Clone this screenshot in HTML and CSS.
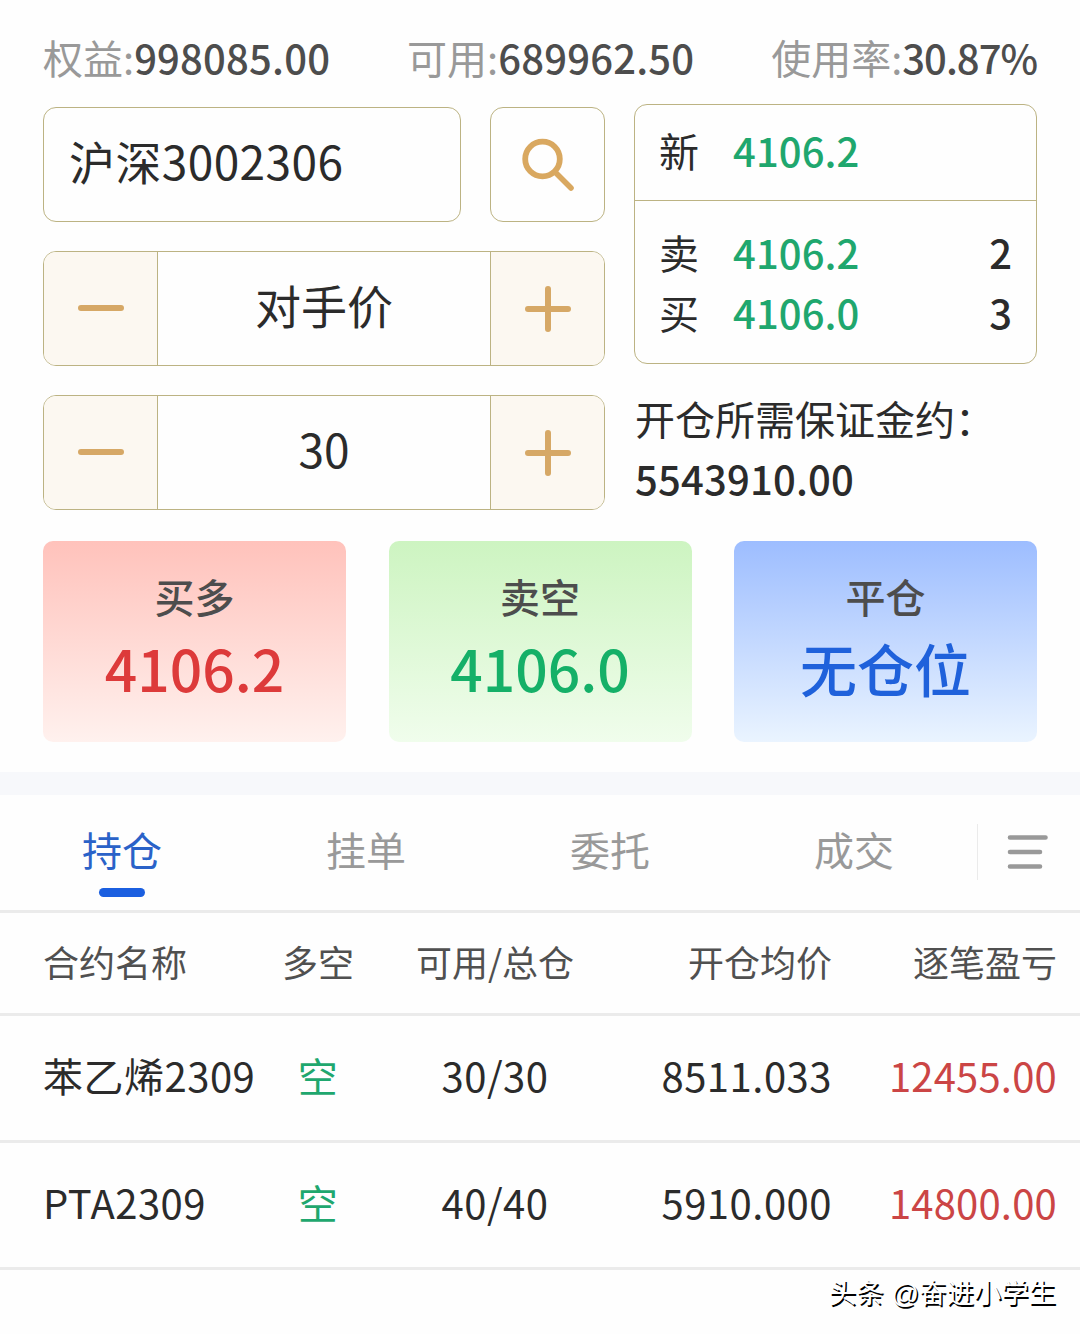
FILE: index.html
```html
<!DOCTYPE html>
<html lang="zh-CN">
  <head>
    <meta charset="UTF-8" />
    <meta name="viewport" content="width=device-width, initial-scale=1.0" />
    <title>期货交易</title>
    <link rel="stylesheet" href="styles.css">
  </head>

  <body>
    <header class="account">
      <div>权益:<b>998085.00</b></div>
      <div>可用:<b>689962.50</b></div>
      <div>使用率:<b class="rate">30.87%</b></div>
    </header>

    <section class="order">
      <div class="order-form">
        <div class="search-row">
          <div class="contract">沪深3002306</div>
          <button class="search" aria-label="搜索">
            <svg width="56" height="56" viewBox="0 0 56 56" fill="none" stroke="#d9a860" stroke-linecap="round">
              <circle cx="22.5" cy="22" r="17.3" stroke-width="5.8" />
              <path d="M35.5 35.5 L51 51" stroke-width="5.6" />
            </svg>
          </button>
        </div>

        <div class="stepper">
          <button class="minus" aria-label="减"><i></i></button>
          <div class="value">对手价</div>
          <button class="plus" aria-label="加"><i></i></button>
        </div>

        <div class="stepper">
          <button class="minus" aria-label="减"><i></i></button>
          <div class="value">30</div>
          <button class="plus" aria-label="加"><i></i></button>
        </div>
      </div>

      <div class="order-info">
        <div class="quote">
          <div class="quote-row latest"><span>新</span><b>4106.2</b></div>
          <div class="quote-list">
            <div class="quote-row"><span>卖</span><b>4106.2</b><em>2</em></div>
            <div class="quote-row"><span>买</span><b>4106.0</b><em>3</em></div>
          </div>
        </div>
        <div class="margin">
          <p>开仓所需保证金约：</p>
          <p class="amount">5543910.00</p>
        </div>
      </div>
    </section>

    <section class="actions">
      <button class="action buy"><span>买多</span><b>4106.2</b></button>
      <button class="action sell"><span>卖空</span><b>4106.0</b></button>
      <button class="action close"><span>平仓</span><b>无仓位</b></button>
    </section>

    <nav class="tabs">
      <a class="tab active">持仓</a>
      <a class="tab">挂单</a>
      <a class="tab">委托</a>
      <a class="tab">成交</a>
      <div class="menu">
        <svg width="42" height="36" viewBox="0 0 42 36" stroke="#999" stroke-width="4.6" stroke-linecap="round">
          <path d="M3 3.5 H38.5 M3 18 H33 M3 32.5 H33" />
        </svg>
      </div>
    </nav>

    <section class="positions">
      <div class="row head">
        <span>合约名称</span>
        <span>多空</span>
        <span>可用/总仓</span>
        <span>开仓均价</span>
        <span>逐笔盈亏</span>
      </div>
      <div class="row">
        <span>苯乙烯2309</span>
        <span class="short">空</span>
        <span>30/30</span>
        <span>8511.033</span>
        <span class="profit">12455.00</span>
      </div>
      <div class="row">
        <span>PTA2309</span>
        <span class="short">空</span>
        <span>40/40</span>
        <span>5910.000</span>
        <span class="profit">14800.00</span>
      </div>
    </section>

    <footer>头条 @奋进小学生</footer>
  </body>
</html>
```
FILE: styles.css
```css
* {
  margin: 0;
  padding: 0;
  box-sizing: border-box;
}

body {
  width: 1080px;
  height: 1334px;
  overflow: hidden;
  background-color: #fefefe;
  color: #2b2b2b;
  font-family: "Noto Sans CJK SC", sans-serif;
  font-size: 40px;
}

button {
  background: none;
  border: none;
  font-family: inherit;
  cursor: pointer;
}

b {
  font-weight: 500;
}

em {
  font-style: normal;
}

/* account summary */
.account {
  display: flex;
  justify-content: space-between;
  height: 104px;
  padding: 27px 43px 0;
  line-height: 60px;
  color: #999;
  white-space: nowrap;
}

.account b {
  color: #4d4d4d;
  letter-spacing: 0.2px;
}

.account .rate {
  letter-spacing: -1px;
}

/* order form */
.order {
  display: flex;
  gap: 29px;
  padding: 0 43px;
}

.order-form {
  display: flex;
  flex-direction: column;
  gap: 29px;
  width: 562px;
  padding-top: 3px;
}

.search-row {
  display: flex;
  gap: 29px;
}

.contract,
.search,
.stepper,
.quote {
  border: 1px solid #bcb383;
  border-radius: 13px;
}

.contract {
  width: 418px;
  height: 115px;
  padding-left: 25px;
  line-height: 104px;
  font-size: 46px;
  letter-spacing: 0.4px;
}

.search {
  display: flex;
  justify-content: center;
  align-items: center;
  width: 115px;
  height: 115px;
}

.stepper {
  display: flex;
  height: 115px;
  overflow: hidden;
}

.stepper button {
  display: grid;
  place-items: center;
  width: 113px;
  background-color: #fcf8f1;
}

.stepper .value {
  flex: 1;
  border: 1px solid #bcb383;
  border-width: 0 1px;
  text-align: center;
  font-size: 46px;
  line-height: 104px;
}

.minus i,
.plus i,
.plus i::after {
  display: block;
  width: 46px;
  height: 6px;
  border-radius: 3px;
  background-color: #d6a866;
}

.minus {
  padding-bottom: 2px;
}

.plus {
  padding-top: 1px;
}

.plus i::after {
  content: "";
  transform: rotate(90deg);
}

/* quote box */
.order-info {
  width: 403px;
}

.quote {
  height: 260px;
}

.quote-row {
  display: flex;
  padding: 0 24px;
  line-height: 60px;
}

.quote-row span {
  width: 74px;
}

.quote-row b {
  color: #1fa76e;
  letter-spacing: 0.1px;
}

.quote-row em {
  margin-left: auto;
  font-weight: 500;
}

.latest {
  height: 96px;
  padding-top: 15px;
  border-bottom: 1px solid #bcb383;
}

.quote-list {
  padding-top: 21px;
}

.margin {
  padding: 24px 0 0 1px;
  line-height: 60px;
  white-space: nowrap;
}

.amount {
  font-weight: 500;
  letter-spacing: 0.2px;
}

/* action buttons */
.actions {
  display: flex;
  justify-content: space-between;
  padding: 31px 43px 30px;
}

.action {
  display: flex;
  flex-direction: column;
  align-items: center;
  width: 303px;
  height: 201px;
  padding-top: 25px;
  border-radius: 10px;
}

.action span {
  font-size: 40px;
  line-height: 60px;
  font-weight: 500;
  color: #4d4d4d;
}

.action b {
  font-size: 57px;
  line-height: 82px;
}

.buy {
  background: linear-gradient(#ffc2bb, #fff1ee);
}

.buy b {
  color: #dd3a3a;
}

.sell {
  background: linear-gradient(#cdf4c1, #f0fdec);
}

.sell b {
  color: #15b068;
}

.close {
  background: linear-gradient(#9dbdff, #eaf4ff);
}

.close b {
  color: #1f61db;
}

/* tabs */
.tabs {
  display: flex;
  height: 141px;
  border-top: 23px solid #f7f8fb;
  border-bottom: 3px solid #ebebeb;
}

.tab {
  display: flex;
  flex-direction: column;
  align-items: center;
  width: 244px;
  padding-top: 24px;
  line-height: 60px;
  color: #999;
}

.tab.active {
  color: #2a62c8;
}

.tab.active::after {
  content: "";
  width: 46px;
  height: 9px;
  margin-top: 9px;
  border-radius: 5px;
  background-color: #1b5fe0;
}

.menu {
  display: flex;
  align-items: center;
  height: 56px;
  margin: 29px 0 0 1px;
  padding-left: 29px;
  border-left: 1px solid #ebebeb;
}

/* positions table */
.row {
  display: grid;
  grid-template-columns: 215px 120px 234px 220px 225px;
  height: 127px;
  padding-left: 43px;
  border-bottom: 3px solid #ebebeb;
  line-height: 118px;
  letter-spacing: 0.5px;
  white-space: nowrap;
}

.row span:nth-child(2),
.row span:nth-child(3) {
  text-align: center;
}

.row span:nth-child(4),
.row span:nth-child(5) {
  text-align: right;
}

.row .profit {
  letter-spacing: 0.2px;
}

.head {
  height: 103px;
  line-height: 97px;
  font-size: 36px;
  letter-spacing: 0;
  color: #505050;
}

.short {
  color: #1fa76e;
}

.profit {
  color: #cb4545;
}

footer {
  padding-right: 24px;
  text-align: right;
  font-family: "Liberation Sans", "Noto Sans CJK SC", sans-serif;
  font-size: 27.4px;
  line-height: 48px;
  color: #fff;
  text-shadow: 1.5px 1.5px 0 #000;
}
```
